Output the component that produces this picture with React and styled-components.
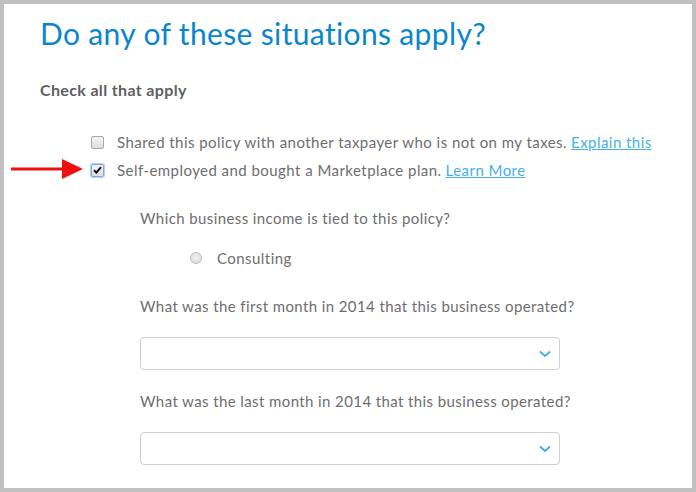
import React from 'react';
import styled, { createGlobalStyle } from 'styled-components';

const GlobalStyle = createGlobalStyle`
  html, body {
    margin: 0;
    padding: 0;
    background: #ffffff;
  }
  body {
    font-family: Lato, "Open Sans", "Liberation Sans", sans-serif;
  }
`;

// Marco gris que rodea toda la captura
const Frame = styled.div`
  box-sizing: border-box;
  width: 696px;
  height: 492px;
  border: 4px solid #c0c0c0;
  background: #ffffff;
  padding: 0 0 0 36px;
  overflow: hidden;
`;

const Title = styled.h1`
  margin: 11px 0 0;
  font-size: 30px;
  font-weight: 400;
  line-height: 36px;
  color: #0a86cc;
  letter-spacing: 0.35px;
`;

const Subhead = styled.h2`
  margin: 29px 0 0;
  font-size: 16px;
  font-weight: 700;
  line-height: 20px;
  color: #5f5f5f;
  letter-spacing: 0.35px;
`;

const OptionList = styled.div`
  display: flex;
  flex-direction: column;
  gap: 8px;
  margin-top: 32px;
  padding-left: 51px;
`;

const OptionRow = styled.label`
  position: relative;
  display: flex;
  align-items: center;
  gap: 13px;
  font-size: 15px;
  line-height: 20px;
  letter-spacing: 0.45px;
  color: #6e6e6e;
`;

const Box = styled.span`
  box-sizing: border-box;
  display: inline-flex;
  align-items: center;
  justify-content: center;
  width: 13px;
  height: 13px;
  border-radius: 2px;
  border: 1px solid ${(p) => (p.checked ? '#7ea6e0' : '#a9a9a9')};
  background: linear-gradient(#f4f4f4, #dedede);
  box-shadow: ${(p) => (p.checked ? '0 0 0 1px #b7cff2' : 'none')};
  flex-shrink: 0;
`;

const Link = styled.a`
  color: #45b1ea;
  text-decoration: underline;
  margin-left: 4px;
`;

// Flecha roja de anotación sobre el margen izquierdo
const Arrow = styled.svg`
  position: absolute;
  left: -80px;
  top: -2px;
`;

const SubSection = styled.div`
  display: flex;
  flex-direction: column;
  padding-left: 100px;
  margin-top: 28px;
`;

const Question = styled.p`
  margin: 0;
  font-size: 15px;
  line-height: 20px;
  letter-spacing: 0.4px;
  color: #6e6e6e;
`;

const RadioRow = styled.label`
  display: flex;
  align-items: center;
  gap: 15px;
  margin: 20px 0 28px 50px;
  font-size: 15px;
  line-height: 20px;
  letter-spacing: 0.45px;
  color: #6e6e6e;
`;

const Radio = styled.span`
  box-sizing: border-box;
  width: 12px;
  height: 12px;
  border-radius: 50%;
  border: 1px solid #bdbdbd;
  background: radial-gradient(circle at 50% 40%, #f2f2f2, #d6d6d6);
`;

const Select = styled.div`
  box-sizing: border-box;
  display: flex;
  align-items: center;
  justify-content: flex-end;
  width: 420px;
  height: 33px;
  margin: 21px 0 21px;
  padding-right: 8px;
  border: 1px solid #cfcfcf;
  border-radius: 4px;
  background: #ffffff;
`;

const Chevron = () => (
  <svg width="12" height="8" viewBox="0 0 12 8">
    <polyline points="1,1.5 6,6 11,1.5" fill="none" stroke="#3aaeea" strokeWidth="1.8" />
  </svg>
);

const Check = () => (
  <svg width="9" height="8" viewBox="0 0 9 8">
    <polyline points="1,4.2 3.4,6.6 8,1.2" fill="none" stroke="#111" strokeWidth="2" />
  </svg>
);

const App = () => (
  <>
    <GlobalStyle />
    <Frame>
      <Title>Do any of these situations apply?</Title>
      <Subhead>Check all that apply</Subhead>
      <OptionList>
        <OptionRow>
          <Box />
          <span>
            Shared this policy with another taxpayer who is not on my taxes.
            <Link href="#">Explain this</Link>
          </span>
        </OptionRow>
        <OptionRow>
          <Arrow width="74" height="22" viewBox="0 0 74 22">
            <line x1="0" y1="11" x2="54" y2="11" stroke="#ee1010" strokeWidth="3" />
            <polygon points="51,1 72,11 51,21" fill="#ee1010" />
          </Arrow>
          <Box checked>
            <Check />
          </Box>
          <span>
            Self-employed and bought a Marketplace plan.
            <Link href="#">Learn More</Link>
          </span>
        </OptionRow>
      </OptionList>
      <SubSection>
        <Question>Which business income is tied to this policy?</Question>
        <RadioRow>
          <Radio />
          <span>Consulting</span>
        </RadioRow>
        <Question>What was the first month in 2014 that this business operated?</Question>
        <Select>
          <Chevron />
        </Select>
        <Question>What was the last month in 2014 that this business operated?</Question>
        <Select>
          <Chevron />
        </Select>
      </SubSection>
    </Frame>
  </>
);

export default App;
